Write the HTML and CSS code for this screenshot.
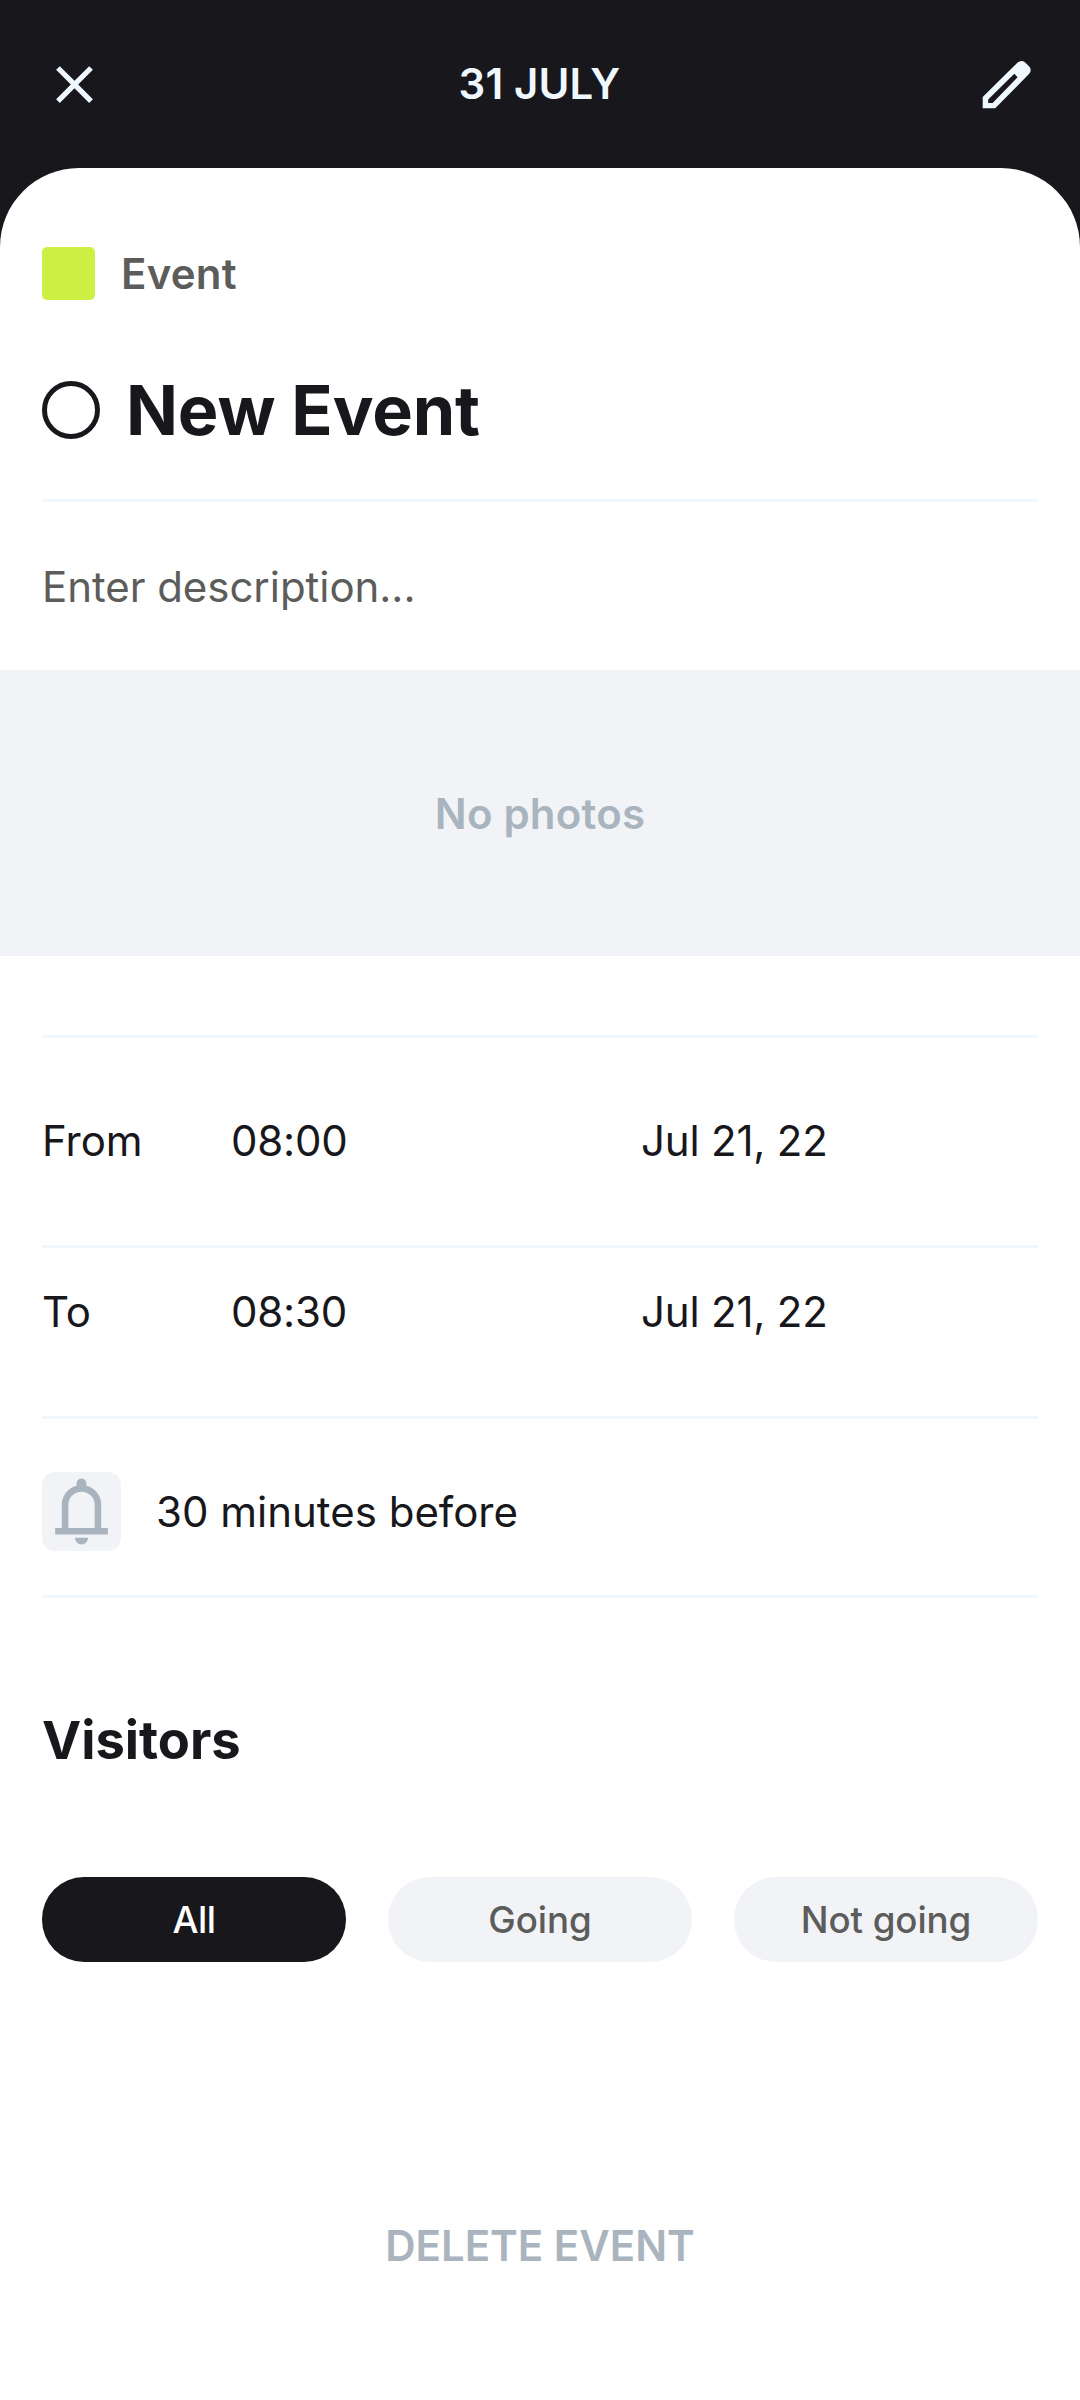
FILE: index.html
```html
<!DOCTYPE html>
<html lang="en">
<head>
<meta charset="utf-8">
<title>31 July</title>
<link rel="stylesheet" href="styles.css">
</head>
<body>
<div class="screen">
  <header class="topbar">
    <svg class="topbar-icon" viewBox="0 0 24 24"><path d="M19 6.41 17.59 5 12 10.59 6.41 5 5 6.41 10.59 12 5 17.59 6.41 19 12 13.41 17.59 19 19 17.59 13.41 12z"/></svg>
    <h1 class="topbar-title">31 JULY</h1>
    <svg class="topbar-icon" viewBox="0 0 63 63"><path fill-rule="evenodd" d="M7.7 55.2V43.9L42.6 9.6Q46.2 6.4 50.2 9.4L54.2 13.5Q57.2 17.2 54.2 20.8L20.2 55.2ZM13.2 49.9H17.6L42.6 24.2 39.3 20.8 13.2 46.4Z"/></svg>
  </header>
  <main class="sheet">
    <div class="kind"><i class="swatch"></i><span>Event</span></div>
    <div class="title"><i class="ring"></i><h2 class="title-text">New Event</h2></div>
    <p class="description">Enter description...</p>
    <div class="photos">No photos</div>
    <div class="when when-from"><span>From</span><span class="time">08:00</span><span class="date">Jul 21, 22</span></div>
    <div class="when when-to"><span>To</span><span class="time">08:30</span><span class="date">Jul 21, 22</span></div>
    <div class="reminder">
      <svg class="bell" viewBox="0 0 24 24"><path fill-rule="evenodd" d="M12 2a1.5 1.5 0 0 0-1.5 1.5v.7A6 6 0 0 0 6 10v7H4v2h16v-2h-2v-7a6 6 0 0 0-4.5-5.8v-.7A1.5 1.5 0 0 0 12 2zm0 4a4 4 0 0 1 4 4v7H8v-7a4 4 0 0 1 4-4zM10 20a2 2 0 0 0 4 0z"/></svg>
      <span>30 minutes before</span>
    </div>
    <h3 class="visitors">Visitors</h3>
    <div class="filters">
      <button class="pill pill-active">All</button>
      <button class="pill">Going</button>
      <button class="pill">Not going</button>
    </div>
    <div class="delete">DELETE EVENT</div>
  </main>
</div>
</body>
</html>
```
FILE: styles.css
```css
* { box-sizing: border-box; }
body { margin: 0; background: #18171c; font-family: Inter, "Liberation Sans", sans-serif; font-size: 42px; font-weight: 400; line-height: 52px; color: #18171c; }
h1, h2, h3, p { margin: 0; font-size: inherit; }
.screen { display: flex; flex-direction: column; height: 2400px; }
.topbar { display: flex; justify-content: space-between; align-items: center; height: 168px; padding: 0 42px 0 43px; color: #f0f8ff; }
.topbar-icon { width: 63px; height: 63px; fill: currentColor; }
.topbar-title { margin-right: 2px; font-weight: 600; letter-spacing: 0.1px; }
.sheet { display: flex; flex-direction: column; flex: 1; padding: 79px 42px 0; background: #fff; border-radius: 79px 79px 0 0; }
.kind { display: flex; align-items: center; gap: 26px; height: 53px; color: #5c5c5a; font-weight: 600; letter-spacing: 0.2px; }
.swatch { width: 53px; height: 53px; border-radius: 5px; background: #ccf144; }
.title { display: flex; align-items: center; gap: 26px; height: 202px; padding-top: 21px; border-bottom: 3px solid #f0f8ff; }
.ring { width: 58px; height: 58px; border: 5.25px solid #18171c; border-radius: 50%; }
.title-text { font-size: 68.25px; font-weight: 700; letter-spacing: -0.15px; }
.description { display: flex; align-items: center; height: 168px; padding-top: 2px; color: #5c5c5a; letter-spacing: -0.05px; }
.photos { display: flex; align-items: center; justify-content: center; height: 286px; margin: 0 -42px 79px; padding-top: 1px; background: #f1f3f7; color: #a9b4be; font-weight: 600; letter-spacing: 0.2px; }
.when { display: grid; grid-template-columns: 189px 410px 1fr; align-items: center; border-bottom: 3px solid #f0f8ff; }
.when-from { height: 213px; padding-bottom: 1px; border-top: 3px solid #f0f8ff; }
.when-to { height: 171px; padding-bottom: 40px; }
.time { letter-spacing: -0.2px; }
.date { letter-spacing: -0.2px; }
.reminder { display: flex; align-items: center; gap: 35px; height: 179px; padding-top: 9px; border-bottom: 3px solid #f0f8ff; }
.bell { width: 79px; height: 79px; border-radius: 13px; background: #f1f3f7; fill: #a9b4be; }
.visitors { height: 279px; padding-top: 116px; font-size: 52.5px; font-weight: 700; }
.filters { display: flex; gap: 42px; }
.pill { flex: 1; height: 85px; padding: 0; border: 0; border-radius: 42px; background: #f1f3f7; color: #5c5c5a; font: 500 36.75px/52px Inter, "Liberation Sans", sans-serif; letter-spacing: -0.1px; }
.pill-active { background: #18171c; color: #fff; letter-spacing: -0.5px; }
.delete { margin-top: 258px; text-align: center; color: #a9b4be; font-weight: 600; }
```
